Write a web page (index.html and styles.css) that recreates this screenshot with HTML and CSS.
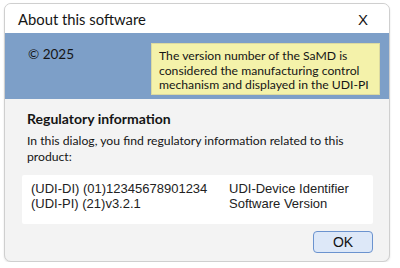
FILE: index.html
```html
<!DOCTYPE html>
<html>
<head>
<meta charset="utf-8">
<link rel="stylesheet" href="styles.css">
</head>
<body>
<div class="window">
  <div class="titlebar">
    <span class="title">About this software</span>
    <span class="close">X</span>
  </div>
  <div class="band">
    <div class="copy">© 2025</div>
    <div class="note">The version number of the SaMD is considered the manufacturing control mechanism and displayed in the UDI-PI</div>
  </div>
  <div class="content">
    <div class="heading">Regulatory information</div>
    <div class="para">In this dialog, you find regulatory information related to this product:</div>
    <div class="udi">
      <span>(UDI-DI) (01)12345678901234</span><span>UDI-Device Identifier</span>
      <span>(UDI-PI) (21)v3.2.1</span><span>Software Version</span>
    </div>
    <div class="actions"><button class="ok">OK</button></div>
  </div>
</div>
</body>
</html>
```
FILE: styles.css
```css
html, body { margin: 0; padding: 0; background: #ffffff; }
body { font-family: Lato, "Open Sans", sans-serif; color: #151515; }
.window {
  margin: 3px 0 0 4px;
  width: 386px;
  height: 259px;
  box-sizing: border-box;
  border: 1px solid #cfcfcf;
  border-radius: 7px;
  overflow: hidden;
  display: flex;
  flex-direction: column;
  background: #f3f3f3;
  box-shadow: 0 1px 2px rgba(0,0,0,0.12);
}
.titlebar {
  height: 28px;
  background: #ffffff;
  display: flex;
  align-items: center;
  justify-content: space-between;
  padding: 1px 21px 0 13px;
  font-size: 14.8px;
  flex: none;
}
.close { font-family: "Liberation Sans", Arial, sans-serif; font-size: 15px; }
.band {
  height: 66px;
  background: #7d9fc8;
  display: flex;
  align-items: flex-start;
  padding: 10px 9px 0 23px;
  box-sizing: border-box;
  flex: none;
}
.copy { font-size: 13.5px; margin-top: 3px; }
.note {
  margin-left: auto;
  width: 229px;
  height: 52px;
  box-sizing: border-box;
  background: #f4f2aa;
  border: 1px solid #dcdaa0;
  padding: 5px 4px 0 7px;
  font-size: 12.2px;
  line-height: 14.5px;
}
.content {
  flex: 1;
  padding: 11px 16px 0 17px;
  display: flex;
  flex-direction: column;
}
.heading { font-weight: bold; font-size: 14px; margin-left: 5px; line-height: 17px; }
.para { font-size: 12.2px; line-height: 16px; margin: 6px 0 0 5px; }
.udi {
  margin-top: 10px;
  background: #ffffff;
  height: 49px;
  box-sizing: border-box;
  padding: 6px 0 0 9px;
  display: grid;
  grid-template-columns: 198px auto;
  align-content: start;
  font-family: "Liberation Sans", Arial, sans-serif;
  font-size: 13px;
  line-height: 15px;
  color: #222;
  border-radius: 2px;
}
.actions { display: flex; justify-content: flex-end; margin-top: 7px; }
.ok {
  width: 60px;
  height: 22px;
  background: #dde8f8;
  border: 1px solid #6b93cf;
  border-radius: 4px;
  font-family: "Liberation Sans", Arial, sans-serif;
  font-size: 14px;
  color: #111;
  padding: 0;
}
```
